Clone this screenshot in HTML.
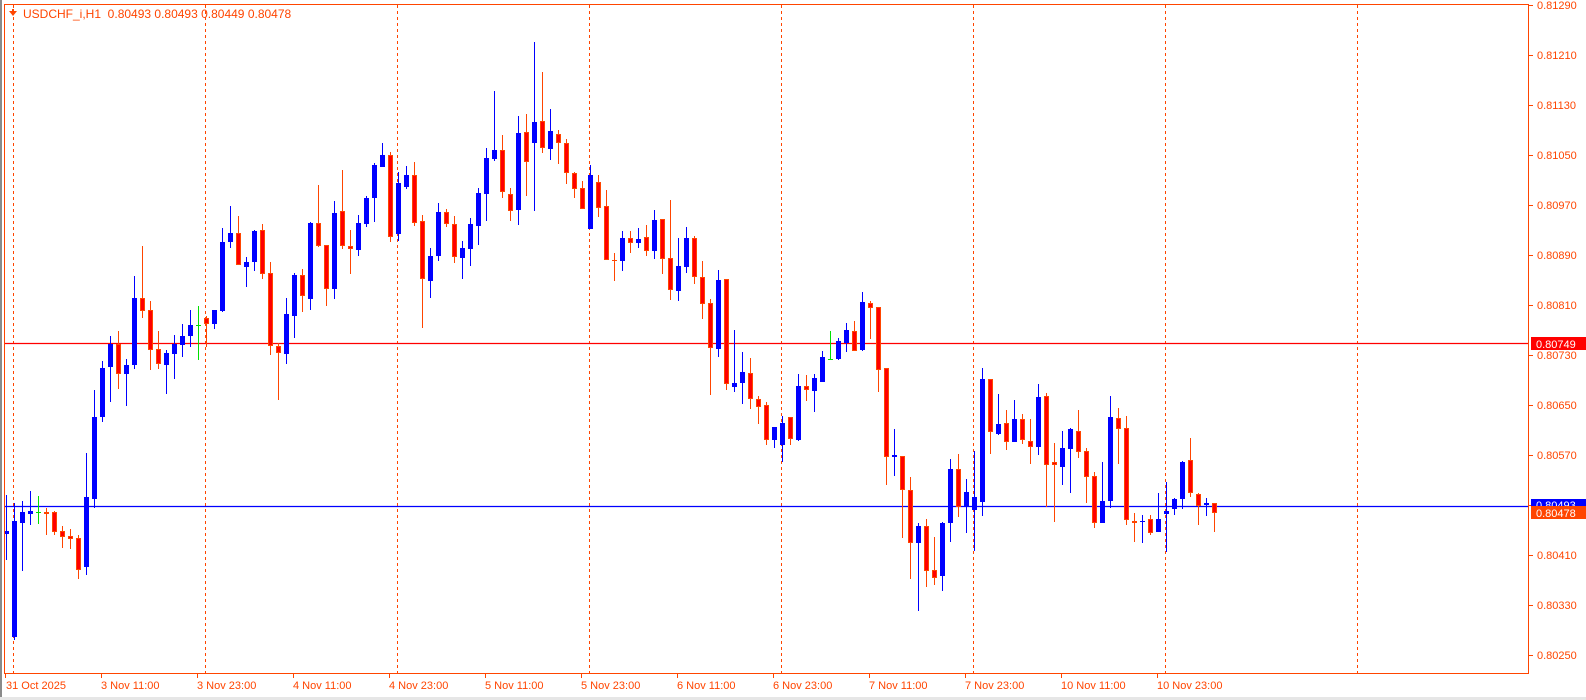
<!DOCTYPE html>
<html><head><meta charset="utf-8"><style>
html,body{margin:0;padding:0;background:#fff;width:1586px;height:700px;overflow:hidden}
svg{display:block}
text{font-family:"Liberation Sans","DejaVu Sans",sans-serif;font-size:11px;fill:#ff4500}
.b{stroke:#0000ff;fill:#0000ff;stroke-width:1}
.r{stroke:#ff4500;fill:#ff0000;stroke-width:1}
.g{stroke:#00e000;fill:none;stroke-width:1}
</style></head><body>
<svg width="1586" height="700" viewBox="0 0 1586 700" xmlns="http://www.w3.org/2000/svg">
<rect x="0" y="0" width="2" height="700" fill="#8a8a8a"/>
<rect x="0" y="697" width="1586" height="3" fill="#e6e6e6"/>
<g stroke="#ff4500" stroke-width="1" stroke-dasharray="3 3" fill="none">
<path d="M13.5 5V673M205.5 5V673M397.5 5V673M589.5 5V673M781.5 5V673M973.5 5V673M1165.5 5V673M1357.5 5V673"/>
</g>
<path d="M5 343.5H1529" stroke="#ff0000" stroke-width="1.3"/>
<path d="M5 506.5H1529" stroke="#0000ff" stroke-width="1.3"/>
<g>
<path class="b" d="M6.5 495V531M6.5 534V560M4.5 531.5h4V533.5h-4z"/>
<path class="b" d="M14.5 503V521M14.5 637V640M12.5 521.5h4V636.5h-4z"/>
<path class="b" d="M22.5 501V512M22.5 523V571M20.5 512.5h4V522.5h-4z"/>
<path class="b" d="M30.5 491V511M30.5 514V525M28.5 511.5h4V513.5h-4z"/>
<path class="g" d="M38.5 496V524M36 512.5h5"/>
<path class="r" d="M46.5 508V512M46.5 514V535M44.5 512.5h4V513.5h-4z"/>
<path class="r" d="M54.5 511V512M54.5 532V535M52.5 512.5h4V531.5h-4z"/>
<path class="r" d="M62.5 526V531M62.5 537V548M60.5 531.5h4V536.5h-4z"/>
<path class="r" d="M70.5 529V536M70.5 539V549M68.5 536.5h4V538.5h-4z"/>
<path class="r" d="M78.5 535V538M78.5 570V579M76.5 538.5h4V569.5h-4z"/>
<path class="b" d="M86.5 453V497M86.5 567V575M84.5 497.5h4V566.5h-4z"/>
<path class="b" d="M94.5 390V417M94.5 499V508M92.5 417.5h4V498.5h-4z"/>
<path class="b" d="M102.5 361V368M102.5 417V422M100.5 368.5h4V416.5h-4z"/>
<path class="b" d="M110.5 336V344M110.5 367V402M108.5 344.5h4V366.5h-4z"/>
<path class="r" d="M118.5 331V344M118.5 374V389M116.5 344.5h4V373.5h-4z"/>
<path class="b" d="M126.5 359V365M126.5 374V406M124.5 365.5h4V373.5h-4z"/>
<path class="b" d="M134.5 276V298M134.5 365V369M132.5 298.5h4V364.5h-4z"/>
<path class="r" d="M142.5 246V298M142.5 311V318M140.5 298.5h4V310.5h-4z"/>
<path class="r" d="M150.5 301V310M150.5 350V370M148.5 310.5h4V349.5h-4z"/>
<path class="r" d="M158.5 331V349M158.5 364V369M156.5 349.5h4V363.5h-4z"/>
<path class="b" d="M166.5 350V353M166.5 365V394M164.5 353.5h4V364.5h-4z"/>
<path class="b" d="M174.5 335V344M174.5 354V379M172.5 344.5h4V353.5h-4z"/>
<path class="b" d="M182.5 324V336M182.5 345V357M180.5 336.5h4V344.5h-4z"/>
<path class="b" d="M190.5 310V325M190.5 336V347M188.5 325.5h4V335.5h-4z"/>
<path class="g" d="M198.5 306V360M196 325.5h5"/>
<path class="r" d="M206.5 316V318M206.5 324V347M204.5 318.5h4V323.5h-4z"/>
<path class="b" d="M214.5 310V310M214.5 324V329M212.5 310.5h4V323.5h-4z"/>
<path class="b" d="M222.5 228V242M222.5 311V312M220.5 242.5h4V310.5h-4z"/>
<path class="b" d="M230.5 206V233M230.5 242V248M228.5 233.5h4V241.5h-4z"/>
<path class="r" d="M238.5 216V233M238.5 265V265M236.5 233.5h4V264.5h-4z"/>
<path class="b" d="M246.5 257V262M246.5 267V287M244.5 262.5h4V266.5h-4z"/>
<path class="b" d="M254.5 230V231M254.5 262V271M252.5 231.5h4V261.5h-4z"/>
<path class="r" d="M262.5 224V230M262.5 274V279M260.5 230.5h4V273.5h-4z"/>
<path class="r" d="M270.5 262V273M270.5 346V355M268.5 273.5h4V345.5h-4z"/>
<path class="r" d="M278.5 343V346M278.5 353V400M276.5 346.5h4V352.5h-4z"/>
<path class="b" d="M286.5 298V314M286.5 354V364M284.5 314.5h4V353.5h-4z"/>
<path class="b" d="M294.5 273V275M294.5 316V338M292.5 275.5h4V315.5h-4z"/>
<path class="r" d="M302.5 269V275M302.5 296V312M300.5 275.5h4V295.5h-4z"/>
<path class="b" d="M310.5 222V223M310.5 299V310M308.5 223.5h4V298.5h-4z"/>
<path class="r" d="M318.5 185V223M318.5 246V247M316.5 223.5h4V245.5h-4z"/>
<path class="r" d="M326.5 245V245M326.5 289V306M324.5 245.5h4V288.5h-4z"/>
<path class="b" d="M334.5 201V213M334.5 289V299M332.5 213.5h4V288.5h-4z"/>
<path class="r" d="M342.5 170V211M342.5 246V249M340.5 211.5h4V245.5h-4z"/>
<path class="r" d="M350.5 230V246M350.5 249V274M348.5 246.5h4V248.5h-4z"/>
<path class="b" d="M358.5 215V223M358.5 250V256M356.5 223.5h4V249.5h-4z"/>
<path class="b" d="M366.5 196V198M366.5 224V227M364.5 198.5h4V223.5h-4z"/>
<path class="b" d="M374.5 163V165M374.5 198V222M372.5 165.5h4V197.5h-4z"/>
<path class="b" d="M382.5 143V155M382.5 167V167M380.5 155.5h4V166.5h-4z"/>
<path class="r" d="M390.5 152V155M390.5 237V242M388.5 155.5h4V236.5h-4z"/>
<path class="b" d="M398.5 172V183M398.5 234V241M396.5 183.5h4V233.5h-4z"/>
<path class="b" d="M406.5 166V175M406.5 187V189M404.5 175.5h4V186.5h-4z"/>
<path class="r" d="M414.5 162V175M414.5 223V226M412.5 175.5h4V222.5h-4z"/>
<path class="r" d="M422.5 215V221M422.5 279V328M420.5 221.5h4V278.5h-4z"/>
<path class="b" d="M430.5 248V256M430.5 281V298M428.5 256.5h4V280.5h-4z"/>
<path class="b" d="M438.5 203V212M438.5 256V261M436.5 212.5h4V255.5h-4z"/>
<path class="r" d="M446.5 209V212M446.5 224V227M444.5 212.5h4V223.5h-4z"/>
<path class="r" d="M454.5 216V224M454.5 257V263M452.5 224.5h4V256.5h-4z"/>
<path class="b" d="M462.5 241V248M462.5 258V279M460.5 248.5h4V257.5h-4z"/>
<path class="b" d="M470.5 218V224M470.5 249V266M468.5 224.5h4V248.5h-4z"/>
<path class="b" d="M478.5 188V193M478.5 226V245M476.5 193.5h4V225.5h-4z"/>
<path class="b" d="M486.5 148V158M486.5 194V221M484.5 158.5h4V193.5h-4z"/>
<path class="b" d="M494.5 91V150M494.5 159V161M492.5 150.5h4V158.5h-4z"/>
<path class="r" d="M502.5 135V150M502.5 192V198M500.5 150.5h4V191.5h-4z"/>
<path class="r" d="M510.5 188V194M510.5 211V221M508.5 194.5h4V210.5h-4z"/>
<path class="b" d="M518.5 116V133M518.5 210V225M516.5 133.5h4V209.5h-4z"/>
<path class="r" d="M526.5 114V132M526.5 162V196M524.5 132.5h4V161.5h-4z"/>
<path class="b" d="M534.5 42V122M534.5 143V211M532.5 122.5h4V142.5h-4z"/>
<path class="r" d="M542.5 72V121M542.5 148V153M540.5 121.5h4V147.5h-4z"/>
<path class="b" d="M550.5 109V131M550.5 149V160M548.5 131.5h4V148.5h-4z"/>
<path class="r" d="M558.5 130V134M558.5 143V164M556.5 134.5h4V142.5h-4z"/>
<path class="r" d="M566.5 139V143M566.5 173V184M564.5 143.5h4V172.5h-4z"/>
<path class="r" d="M574.5 172V173M574.5 189V198M572.5 173.5h4V188.5h-4z"/>
<path class="r" d="M582.5 181V188M582.5 209V209M580.5 188.5h4V208.5h-4z"/>
<path class="b" d="M590.5 165V175M590.5 229V229M588.5 175.5h4V228.5h-4z"/>
<path class="r" d="M598.5 175V182M598.5 208V217M596.5 182.5h4V207.5h-4z"/>
<path class="r" d="M606.5 190V206M606.5 260V260M604.5 206.5h4V259.5h-4z"/>
<path class="r" d="M614.5 253V281M612 260.5h5"/>
<path class="b" d="M622.5 231V238M622.5 261V271M620.5 238.5h4V260.5h-4z"/>
<path class="r" d="M630.5 231V238M630.5 243V253M628.5 238.5h4V242.5h-4z"/>
<path class="b" d="M638.5 228V239M638.5 243V248M636.5 239.5h4V242.5h-4z"/>
<path class="r" d="M646.5 225V237M646.5 251V256M644.5 237.5h4V250.5h-4z"/>
<path class="b" d="M654.5 210V220M654.5 251V259M652.5 220.5h4V250.5h-4z"/>
<path class="r" d="M662.5 219V219M662.5 259V274M660.5 219.5h4V258.5h-4z"/>
<path class="r" d="M670.5 200V258M670.5 290V300M668.5 258.5h4V289.5h-4z"/>
<path class="b" d="M678.5 238V266M678.5 291V301M676.5 266.5h4V290.5h-4z"/>
<path class="b" d="M686.5 227V238M686.5 267V273M684.5 238.5h4V266.5h-4z"/>
<path class="r" d="M694.5 236V238M694.5 277V284M692.5 238.5h4V276.5h-4z"/>
<path class="r" d="M702.5 261V277M702.5 304V319M700.5 277.5h4V303.5h-4z"/>
<path class="r" d="M710.5 299V303M710.5 348V395M708.5 303.5h4V347.5h-4z"/>
<path class="b" d="M718.5 270V280M718.5 349V357M716.5 280.5h4V348.5h-4z"/>
<path class="r" d="M726.5 279V279M726.5 384V390M724.5 279.5h4V383.5h-4z"/>
<path class="b" d="M734.5 330V383M734.5 387V392M732.5 383.5h4V386.5h-4z"/>
<path class="b" d="M742.5 352V372M742.5 383V404M740.5 372.5h4V382.5h-4z"/>
<path class="r" d="M750.5 358V373M750.5 399V409M748.5 373.5h4V398.5h-4z"/>
<path class="r" d="M758.5 396V399M758.5 407V424M756.5 399.5h4V406.5h-4z"/>
<path class="r" d="M766.5 402V405M766.5 440V445M764.5 405.5h4V439.5h-4z"/>
<path class="b" d="M774.5 427V427M774.5 440V448M772.5 427.5h4V439.5h-4z"/>
<path class="b" d="M782.5 416V423M782.5 445V462M780.5 423.5h4V444.5h-4z"/>
<path class="r" d="M790.5 417V417M790.5 439V445M788.5 417.5h4V438.5h-4z"/>
<path class="b" d="M798.5 374V386M798.5 440V441M796.5 386.5h4V439.5h-4z"/>
<path class="r" d="M806.5 375V386M806.5 390V401M804.5 386.5h4V389.5h-4z"/>
<path class="b" d="M814.5 374V378M814.5 391V412M812.5 378.5h4V390.5h-4z"/>
<path class="b" d="M822.5 351V357M822.5 382V382M820.5 357.5h4V381.5h-4z"/>
<path class="g" d="M830.5 331V359M828 359.5h5"/>
<path class="b" d="M838.5 338V341M838.5 359V360M836.5 341.5h4V358.5h-4z"/>
<path class="b" d="M846.5 323V330M846.5 343V352M844.5 330.5h4V342.5h-4z"/>
<path class="r" d="M854.5 321V331M854.5 351V351M852.5 331.5h4V350.5h-4z"/>
<path class="b" d="M862.5 292V302M862.5 350V351M860.5 302.5h4V349.5h-4z"/>
<path class="r" d="M870.5 301V303M870.5 308V339M868.5 303.5h4V307.5h-4z"/>
<path class="r" d="M878.5 307V307M878.5 370V392M876.5 307.5h4V369.5h-4z"/>
<path class="r" d="M886.5 368V368M886.5 457V485M884.5 368.5h4V456.5h-4z"/>
<path class="b" d="M894.5 429V455M894.5 457V476M892.5 455.5h4V456.5h-4z"/>
<path class="r" d="M902.5 456V456M902.5 490V538M900.5 456.5h4V489.5h-4z"/>
<path class="r" d="M910.5 477V490M910.5 543V579M908.5 490.5h4V542.5h-4z"/>
<path class="b" d="M918.5 523V526M918.5 543V611M916.5 526.5h4V542.5h-4z"/>
<path class="r" d="M926.5 519V526M926.5 571V587M924.5 526.5h4V570.5h-4z"/>
<path class="r" d="M934.5 537V570M934.5 578V585M932.5 570.5h4V577.5h-4z"/>
<path class="b" d="M942.5 522V523M942.5 576V591M940.5 523.5h4V575.5h-4z"/>
<path class="b" d="M950.5 459V469M950.5 523V542M948.5 469.5h4V522.5h-4z"/>
<path class="r" d="M958.5 454V469M958.5 507V517M956.5 469.5h4V506.5h-4z"/>
<path class="b" d="M966.5 479V492M966.5 507V533M964.5 492.5h4V506.5h-4z"/>
<path class="b" d="M974.5 451V497M974.5 510V551M972.5 497.5h4V509.5h-4z"/>
<path class="b" d="M982.5 368V379M982.5 502V516M980.5 379.5h4V501.5h-4z"/>
<path class="r" d="M990.5 379V379M990.5 432V454M988.5 379.5h4V431.5h-4z"/>
<path class="b" d="M998.5 394V424M998.5 434V435M996.5 424.5h4V433.5h-4z"/>
<path class="r" d="M1006.5 410V423M1006.5 442V450M1004.5 423.5h4V441.5h-4z"/>
<path class="b" d="M1014.5 400V419M1014.5 442V442M1012.5 419.5h4V441.5h-4z"/>
<path class="r" d="M1022.5 414V419M1022.5 440V444M1020.5 419.5h4V439.5h-4z"/>
<path class="r" d="M1030.5 419V441M1030.5 447V464M1028.5 441.5h4V446.5h-4z"/>
<path class="b" d="M1038.5 384V397M1038.5 447V455M1036.5 397.5h4V446.5h-4z"/>
<path class="r" d="M1046.5 393V396M1046.5 465V507M1044.5 396.5h4V464.5h-4z"/>
<path class="r" d="M1054.5 443V462M1054.5 465V522M1052.5 462.5h4V464.5h-4z"/>
<path class="b" d="M1062.5 431V448M1062.5 467V485M1060.5 448.5h4V466.5h-4z"/>
<path class="b" d="M1070.5 428V429M1070.5 449V493M1068.5 429.5h4V448.5h-4z"/>
<path class="r" d="M1078.5 410V431M1078.5 452V458M1076.5 431.5h4V451.5h-4z"/>
<path class="r" d="M1086.5 448V451M1086.5 477V503M1084.5 451.5h4V476.5h-4z"/>
<path class="r" d="M1094.5 472V476M1094.5 523V528M1092.5 476.5h4V522.5h-4z"/>
<path class="b" d="M1102.5 462V501M1102.5 523V523M1100.5 501.5h4V522.5h-4z"/>
<path class="b" d="M1110.5 396V417M1110.5 501V508M1108.5 417.5h4V500.5h-4z"/>
<path class="r" d="M1118.5 408V418M1118.5 429V464M1116.5 418.5h4V428.5h-4z"/>
<path class="r" d="M1126.5 416V428M1126.5 520V525M1124.5 428.5h4V519.5h-4z"/>
<path class="r" d="M1134.5 513V521M1134.5 523V542M1132.5 521.5h4V522.5h-4z"/>
<path class="b" d="M1142.5 515V543M1140 521.5h5"/>
<path class="r" d="M1150.5 515V519M1150.5 533V535M1148.5 519.5h4V532.5h-4z"/>
<path class="b" d="M1158.5 493V519M1158.5 532V532M1156.5 519.5h4V531.5h-4z"/>
<path class="b" d="M1166.5 482V511M1166.5 514V552M1164.5 511.5h4V513.5h-4z"/>
<path class="b" d="M1174.5 498V499M1174.5 509V515M1172.5 499.5h4V508.5h-4z"/>
<path class="b" d="M1182.5 461V462M1182.5 499V509M1180.5 462.5h4V498.5h-4z"/>
<path class="r" d="M1190.5 438V460M1190.5 493V497M1188.5 460.5h4V492.5h-4z"/>
<path class="r" d="M1198.5 493V494M1198.5 506V525M1196.5 494.5h4V505.5h-4z"/>
<path class="b" d="M1206.5 498V503M1206.5 505V516M1204.5 503.5h4V504.5h-4z"/>
<path class="r" d="M1214.5 503V503M1214.5 513V532M1212.5 503.5h4V512.5h-4z"/>
</g>
<rect x="4.5" y="4.5" width="1524" height="669" fill="none" stroke="#ff4500" stroke-width="1"/>
<g stroke="#ff4500" stroke-width="1">
<path d="M1529 5.5h4M1529 55.5h4M1529 105.5h4M1529 155.5h4M1529 205.5h4M1529 255.5h4M1529 305.5h4M1529 355.5h4M1529 405.5h4M1529 455.5h4M1529 505.5h4M1529 555.5h4M1529 605.5h4M1529 655.5h4"/>
<path d="M5.5 674v4M101.5 674v4M197.5 674v4M293.5 674v4M389.5 674v4M485.5 674v4M581.5 674v4M677.5 674v4M773.5 674v4M869.5 674v4M965.5 674v4M1061.5 674v4M1157.5 674v4"/>
</g>
<g>
<text x="1537" y="9">0.81290</text>
<text x="1537" y="59">0.81210</text>
<text x="1537" y="109">0.81130</text>
<text x="1537" y="159">0.81050</text>
<text x="1537" y="209">0.80970</text>
<text x="1537" y="259">0.80890</text>
<text x="1537" y="309">0.80810</text>
<text x="1537" y="359">0.80730</text>
<text x="1537" y="409">0.80650</text>
<text x="1537" y="459">0.80570</text>
<text x="1537" y="559">0.80410</text>
<text x="1537" y="609">0.80330</text>
<text x="1537" y="659">0.80250</text>
</g>
<rect x="1531" y="337" width="55" height="13" fill="#ff0000"/>
<text x="1536" y="348" style="fill:#fff">0.80749</text>
<rect x="1531" y="499" width="55" height="8" fill="#0000ff"/>
<text x="1536" y="509" style="fill:#fff">0.80493</text>
<rect x="1531" y="506" width="55" height="13" fill="#ff4500"/>
<text x="1536" y="517" style="fill:#fff">0.80478</text>
<g>
<text x="6" y="689">31 Oct 2025</text>
<text x="101" y="689">3 Nov 11:00</text>
<text x="197" y="689">3 Nov 23:00</text>
<text x="293" y="689">4 Nov 11:00</text>
<text x="389" y="689">4 Nov 23:00</text>
<text x="485" y="689">5 Nov 11:00</text>
<text x="581" y="689">5 Nov 23:00</text>
<text x="677" y="689">6 Nov 11:00</text>
<text x="773" y="689">6 Nov 23:00</text>
<text x="869" y="689">7 Nov 11:00</text>
<text x="965" y="689">7 Nov 23:00</text>
<text x="1061" y="689">10 Nov 11:00</text>
<text x="1157" y="689">10 Nov 23:00</text>
</g>
<path d="M9 11h8l-4 5z" fill="#ff4500"/>
<rect x="12" y="9" width="2" height="2" fill="#ff4500"/>
<text x="23" y="18" style="font-size:12px;white-space:pre" xml:space="preserve">USDCHF_i,H1  0.80493 0.80493 0.80449 0.80478</text>
</svg>
</body></html>
